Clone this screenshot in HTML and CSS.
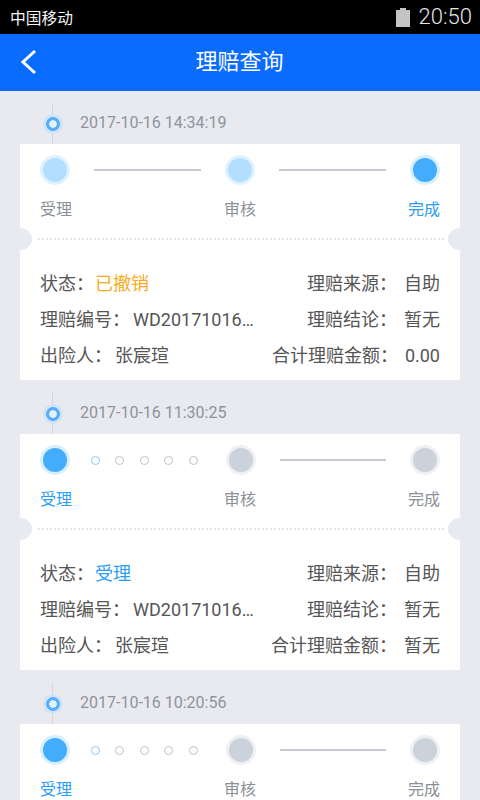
FILE: index.html
```html
<!DOCTYPE html>
<html lang="zh-CN">
<head>
<meta charset="utf-8">
<title>理赔查询</title>
<link rel="stylesheet" href="styles.css">
</head>
<body>
<div class="screen">
  <div class="statusbar">
    <span class="carrier">中国移动</span>
    <div class="status-right">
      <svg class="battery" width="14" height="19" viewBox="0 0 14 19"><path d="M4 0h6v2h4v17H0V2h4z" fill="#c4c4c4"/></svg>
      <span class="clock">20:50</span>
    </div>
  </div>
  <header class="appbar">
    <svg class="back" width="18" height="26" viewBox="0 0 18 26"><path d="M15 2 3 13l12 11" fill="none" stroke="#fff" stroke-width="3"/></svg>
    <h1 class="title">理赔查询</h1>
  </header>
  <main class="list">

    <section class="item">
      <div class="stamp"><span class="pin"></span><span class="date">2017-10-16 14:34:19</span></div>
      <div class="card">
        <div class="steps">
          <span class="node pale"></span><span class="line"></span>
          <span class="node pale"></span><span class="line"></span>
          <span class="node on"></span>
        </div>
        <div class="labels"><span>受理</span><span>审核</span><span class="active">完成</span></div>
        <div class="tear"></div>
        <div class="rows">
          <div class="row"><span>状态<i class="colon">：</i><b class="warn">已撤销</b></span><span>理赔来源<i class="colon">：</i><span class="rv">自助</span></span></div>
          <div class="row"><span>理赔编号<i class="colon">：</i><span class="lv">WD20171016…</span></span><span>理赔结论<i class="colon">：</i><span class="rv">暂无</span></span></div>
          <div class="row"><span>出险人<i class="colon">：</i><span class="lv">张宸瑄</span></span><span>合计理赔金额<i class="colon">：</i><span class="rv">0.00</span></span></div>
        </div>
      </div>
    </section>

    <section class="item">
      <div class="stamp"><span class="pin"></span><span class="date">2017-10-16 11:30:25</span></div>
      <div class="card">
        <div class="steps">
          <span class="node on"></span>
          <span class="dots"><i class="first"></i><i></i><i></i><i></i><i></i></span>
          <span class="node off"></span><span class="line"></span>
          <span class="node off"></span>
        </div>
        <div class="labels"><span class="active">受理</span><span>审核</span><span>完成</span></div>
        <div class="tear"></div>
        <div class="rows">
          <div class="row"><span>状态<i class="colon">：</i><b class="info">受理</b></span><span>理赔来源<i class="colon">：</i><span class="rv">自助</span></span></div>
          <div class="row"><span>理赔编号<i class="colon">：</i><span class="lv">WD20171016…</span></span><span>理赔结论<i class="colon">：</i><span class="rv">暂无</span></span></div>
          <div class="row"><span>出险人<i class="colon">：</i><span class="lv">张宸瑄</span></span><span>合计理赔金额<i class="colon">：</i><span class="rv">暂无</span></span></div>
        </div>
      </div>
    </section>

    <section class="item">
      <div class="stamp"><span class="pin"></span><span class="date">2017-10-16 10:20:56</span></div>
      <div class="card">
        <div class="steps">
          <span class="node on"></span>
          <span class="dots"><i class="first"></i><i></i><i></i><i></i><i></i></span>
          <span class="node off"></span><span class="line"></span>
          <span class="node off"></span>
        </div>
        <div class="labels"><span class="active">受理</span><span>审核</span><span>完成</span></div>
      </div>
    </section>

  </main>
</div>
</body>
</html>
```
FILE: styles.css
```css
* { box-sizing: border-box; }
html, body { margin: 0; padding: 0; }
body {
  font-family: Roboto, "Noto Sans CJK SC", sans-serif;
  font-weight: 400;
  background: #e8eaef;
}
.screen { width: 480px; height: 800px; overflow: hidden; display: flex; flex-direction: column; }

.statusbar {
  height: 34px; flex: none; background: #000; color: #f4f4f4;
  display: flex; align-items: center; justify-content: space-between;
  padding: 0 8px 0 10px;
}
.carrier { font-size: 15.75px; }
.status-right { display: flex; align-items: center; gap: 9px; }
.battery { display: block; }
.clock { font-weight: 300; font-size: 22px; color: #e6e6e6; line-height: 36px; }

.appbar {
  height: 57px; flex: none; background: #0a6cff; color: #fff;
  display: flex; align-items: center; justify-content: center; position: relative;
  padding: 0 1px 2px 0;
}
.back { position: absolute; left: 20px; top: 15px; }
.title { margin: 0; font-size: 22px; font-weight: 400; line-height: 30px; }

.list { display: flex; flex-direction: column; }

.stamp { height: 53px; position: relative; display: flex; align-items: center; padding: 10px 0 0 80px; }
.item + .item .stamp { height: 54px; }
.stamp::before {
  content: ""; position: absolute; left: 52px; top: 13px; bottom: 0; width: 1px; background: #d3d5da;
}
.pin {
  position: absolute; left: 43px; top: 23px; width: 20px; height: 20px; border-radius: 50%;
  background: radial-gradient(circle closest-side, #e2f1fd 0 3.5px, #5aaef8 4px 6.6px, #cfe3fb 7.2px 10px);
}
.item + .item .pin { top: 24px; }
.date { font-size: 16px; color: #8f939c; }

.card { background: #fff; margin: 0 20px; width: 440px; height: 236px; position: relative; padding-top: 11px; }

.steps { display: flex; align-items: center; padding: 0 20px; height: 30px; }
.node { width: 30px; height: 30px; border-radius: 50%; flex: none; border: 3px solid; }
.node.pale { background: #b3deff; border-color: #e0f2ff; }
.node.on { background: #43acfb; border-color: #d6efff; }
.node.off { background: #cbd2db; border-color: #eef0f3; }
.line { flex: 1; height: 2px; margin: 0 24px; background: #c5c9d1; }
.dots { flex: 1; display: flex; justify-content: space-between; margin: 0 28px 0 21px; }
.dots i { width: 9px; height: 9px; border-radius: 50%; border: 1.5px solid #bcc1c9; }
.dots i.first { border-color: #8cc8f7; }

.labels { display: flex; justify-content: space-between; padding: 0 20px; margin-top: 13px; font-size: 16px; line-height: 24px; color: #8a8f98; }
.labels .active { color: #2a9df4; }

.tear { margin: 16px 16px 0 18px; border-top: 2px dotted #e3e5e9; height: 0; position: relative; }
.tear::before, .tear::after {
  content: ""; position: absolute; top: -12px; width: 24px; height: 22px; border-radius: 50%; background: #e8eaef;
}
.tear::before { left: -30px; }
.tear::after { right: -28px; }

.rows { padding: 24px 20px 0 20px; }
.row { height: 36px; display: flex; justify-content: space-between; align-items: center; font-size: 18px; color: #555; white-space: nowrap; }
.row b { font-weight: 400; margin-left: 1px; }
.colon { font-style: normal; font-family: "Noto Sans CJK TC", sans-serif; }
.lv { margin-left: 3px; }
.rv { margin-left: 7px; }
.warn { color: #f7ab1e; }
.info { color: #2a9df4; }
```
